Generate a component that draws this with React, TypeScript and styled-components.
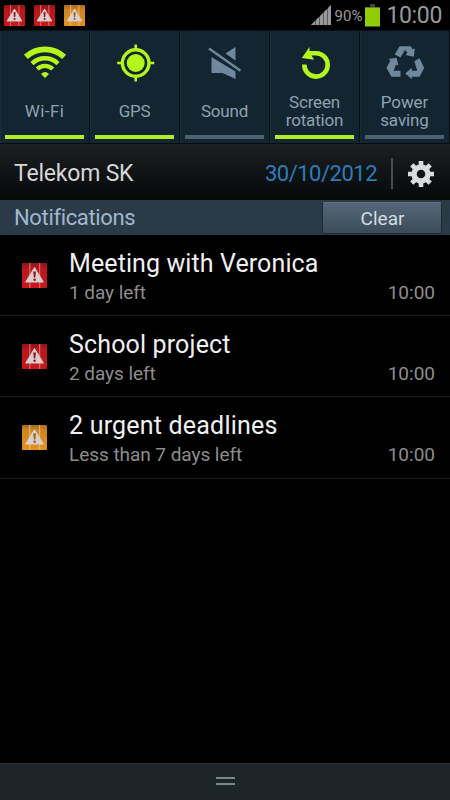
import React from "react";
import styled, { createGlobalStyle } from "styled-components";

const GlobalStyle = createGlobalStyle`
  * { box-sizing: border-box; }
  html, body { margin: 0; background: #000; }
`;

const Screen = styled.div`
  width: 450px;
  height: 800px;
  display: flex;
  flex-direction: column;
  overflow: hidden;
  background: #000;
  font-family: Roboto, "Noto Sans", sans-serif;
`;

const Label = styled.span<{ $size: number; $color: string; $track?: number; $line?: number }>`
  font-size: ${(p) => p.$size}px;
  line-height: ${(p) => p.$line ?? p.$size + 4}px;
  letter-spacing: ${(p) => p.$track ?? 0}px;
  color: ${(p) => p.$color};
  white-space: pre;
`;

const StatusBar = styled.header`
  height: 31px;
  flex: none;
  display: flex;
  justify-content: space-between;
  border-bottom: 1px solid #07121a;
  padding: 0 8px 0 4px;
`;

const StatusAlerts = styled.div`
  display: flex;
  gap: 9px;
  padding-top: 5px;
`;

const StatusInfo = styled.div`
  display: flex;
  align-items: center;
`;

const BatteryLevel = styled.div`
  display: flex;
  padding: 2px 3px 0 3px;
`;

const Clock = styled.div`
  display: flex;
  padding: 1px 0 0 6px;
`;

const Tiles = styled.nav`
  height: 113px;
  flex: none;
  display: grid;
  grid-template-columns: repeat(5, 90px);
  background: #132530;
  border-bottom: 1px solid #050b0f;
`;

const Tile = styled.div`
  display: flex;
  flex-direction: column;
  align-items: center;
  border-right: 1px solid #070f15;
  box-shadow: inset 1px 0 #192d39;
  padding: 12px 0 4px;
`;

const TileIcon = styled.div`
  height: 40px;
`;

const TileCaption = styled.div`
  height: 50px;
  padding-top: 6px;
  display: flex;
  flex-direction: column;
  align-items: center;
  justify-content: center;
`;

const Indicator = styled.div<{ $on: boolean }>`
  width: 79px;
  height: 4px;
  margin-top: 2px;
  background: ${(p) => (p.$on ? "#b0ee24" : "#4c6273")};
`;

const CarrierBar = styled.div`
  height: 56px;
  flex: none;
  display: flex;
  align-items: center;
  padding: 3px 15px 0 14px;
  background: linear-gradient(#1c2022, #060808);
`;

const Carrier = styled.div`
  flex: 1;
  display: flex;
`;

const Divider = styled.div`
  width: 2px;
  height: 31px;
  margin: 0 14px 0 14px;
  background: #4b4e50;
`;

const SectionBar = styled.div`
  height: 35px;
  flex: none;
  display: flex;
  align-items: center;
  justify-content: space-between;
  padding: 1px 8px 0 14px;
  background: #2b3a47;
`;

const ClearButton = styled.button`
  width: 120px;
  height: 32px;
  padding: 0 0 0 1px;
  display: flex;
  align-items: center;
  justify-content: center;
  border: 1px solid #1c2832;
  border-top-color: #61717f;
  border-radius: 2px;
  background: linear-gradient(#54677a, #3c4b59);
  font-family: inherit;
`;

const Row = styled.article<{ $height: number }>`
  height: ${(p) => p.$height}px;
  flex: none;
  display: grid;
  grid-template-columns: 47px 1fr;
  border-bottom: 1px solid #171c20;
  padding: 14px 15px 0 22px;
`;

const RowIcon = styled.div`
  padding-top: 14px;
`;

const RowText = styled.div`
  display: flex;
  flex-direction: column;
`;

const RowDetail = styled.div`
  display: flex;
  justify-content: space-between;
`;

const Spacer = styled.div`
  flex: 1;
`;

const Handle = styled.footer`
  height: 37px;
  flex: none;
  display: flex;
  flex-direction: column;
  align-items: center;
  gap: 4px;
  padding-top: 13px;
  background: #1e2528;
  border-top: 1px solid #2b3137;
`;

const Grip = styled.div`
  width: 19px;
  height: 2px;
  background: #7c8689;
`;

const LIME = "#b4f51c";
const STEEL = "#6f889d";

function Alert({ size, tone }: { size: number; tone: "red" | "amber" }) {
  const red = tone === "red";
  const id = `alert-${tone}`;
  const mark = "#d9cfcf";
  const ink = red ? "#951619" : "#9c6418";
  return (
    <svg width={size} height={size} viewBox="0 0 24 24" display="block">
      <defs>
        <linearGradient id={id} x1="0" y1="0" x2="0" y2="1">
          <stop offset="0" stopColor={red ? "#8e1519" : "#a86c22"} />
          <stop offset=".25" stopColor={red ? "#b9171b" : "#cf8620"} />
          <stop offset="1" stopColor={red ? "#c8191c" : "#e1931e"} />
        </linearGradient>
      </defs>
      <rect width="24" height="24" rx="1" fill={`url(#${id})`} />
      <path d="M7.5 0v24M17 0v24" stroke={red ? "#d8787a" : "#e9bd7a"} strokeWidth="1" />
      <path d="M12 4.6 20.4 18.3H3.6Z" fill={mark} stroke={mark} strokeWidth="1" strokeLinejoin="round" />
      <path d="M10.8 8.2h2.6l-.6 5.8h-1.4Z" fill={ink} />
      <circle cx="12.1" cy="16" r="1.2" fill={ink} />
    </svg>
  );
}

const Signal = () => (
  <svg width="21" height="22" viewBox="0 0 21 22">
    <path d="M0 21 20 1V21Z" fill="#5a5a5a" />
    <path d="M0 21 4 17v4ZM5 16 8 13v8H5ZM9 12 12 9v12H9ZM13 8 16 5v16H13ZM17 4l3-3v20h-3Z" fill="#999" />
  </svg>
);

const Battery = () => (
  <svg width="15" height="23" viewBox="0 0 15 23">
    <path d="M5 0h5v3H5Z" fill="#454545" />
    <rect y="3" width="15" height="19.5" fill="#91cc09" />
    <path d="M0 3.5h15" stroke="#617f20" />
  </svg>
);

const Wifi = () => (
  <svg width="44" height="40" viewBox="0 0 44 40">
    <g fill="none" stroke={LIME}>
      <path d="M2.9 13.9a28 28 0 0 1 38.2 0" strokeWidth="5.8" />
      <path d="M9 20.6a18.5 18.5 0 0 1 26 0" strokeWidth="4.4" />
      <path d="M14.3 26a11 11 0 0 1 15.4 0" strokeWidth="4.2" />
    </g>
    <path d="M18 31Q22 27 26 31L22 35Z" fill={LIME} />
  </svg>
);

const Gps = () => (
  <svg width="40" height="40" viewBox="0 0 40 40">
    <g transform="translate(.7 0)">
      <circle cx="20" cy="20" r="13.3" fill="none" stroke={LIME} strokeWidth="3.4" />
      <circle cx="20" cy="20" r="9" fill={LIME} />
      <path d="M20 1.5v5M20 33.5v5M1.5 20h5M33.5 20h5" stroke={LIME} strokeWidth="2.6" />
    </g>
  </svg>
);

const Mute = () => (
  <svg width="44" height="40" viewBox="0 0 44 40">
    <path d="M32.500 4V17.500L22.500 10.500ZM8.500 14 32.500 28.500V36L19.500 30H8.500Z" fill={STEEL} />
    <path d="M6 5.500 37.500 27.800" stroke="#132530" strokeWidth="5" />
    <path d="M6 5.500 37.500 27.800" stroke={STEEL} strokeWidth="2.4" />
  </svg>
);

const Rotate = () => (
  <svg width="40" height="40" viewBox="0 0 40 40">
    <path d="M9.300 21.500a11.700 11.700 0 1 0 12-11.300H14" fill="none" stroke={LIME} strokeWidth="4.6" />
    <path d="M14.500 4V8.500L19 16.800 6.800 15Z" fill={LIME} />
  </svg>
);

const Recycle = () => (
  <svg width="40" height="40" viewBox="0 0 40 40">
    <g fill={STEEL}>
      <path d="M9.800 11.500 14.500 3.300H25.800L27.500 6.300 29.800 5.500 28.800 13.700 20.500 12 22.500 9.500 20 7 15.500 14.500Z" />
      <path d="M3.500 16 11.500 14.800 13.500 22.300 11 21.800 8.500 27.700H15.500V33.700H6.500L1.500 25 5.300 17.800Z" />
      <path d="M29.300 18.300 34.500 15.300 39.200 25 34.500 33.700H26.800V36.300L20.300 30.500 26.800 24.800V27.700H32.200Z" />
    </g>
  </svg>
);

const Gear = () => (
  <svg width="28" height="28" viewBox="0 0 28 28">
    <g stroke="#d9dbdc">
      <circle cx="14" cy="14" r="7" fill="none" strokeWidth="5.4" />
      <path d="M14 1v5M14 22v5M1 14h5M22 14h5M4.800 4.800l3.700 3.700M19.500 19.500l3.700 3.700M23.200 4.800l-3.700 3.700M8.500 19.500l-3.700 3.700" strokeWidth="4.6" />
    </g>
  </svg>
);

const tiles = [
  { lines: ["Wi-Fi"], on: true, icon: <Wifi />, track: 0.4 },
  { lines: ["GPS"], on: true, icon: <Gps />, track: -0.3 },
  { lines: ["Sound"], on: false, icon: <Mute />, track: -0.2 },
  { lines: ["Screen", "rotation"], on: true, icon: <Rotate />, track: -0.2 },
  { lines: ["Power", "saving"], on: false, icon: <Recycle />, track: -0.1 },
];

const notices = [
  { title: "Meeting with Veronica", detail: "1 day left", tone: "red" as const, height: 81, track: 0.1 },
  { title: "School project", detail: "2 days left", tone: "red" as const, height: 81, track: 0.15 },
  { title: "2 urgent deadlines", detail: "Less than 7 days left", tone: "amber" as const, height: 82, track: 0.2 },
];

export default function App() {
  return (
    <Screen>
      <GlobalStyle />
      <StatusBar>
        <StatusAlerts>
          <Alert size={21} tone="red" />
          <Alert size={21} tone="red" />
          <Alert size={21} tone="amber" />
        </StatusAlerts>
        <StatusInfo>
          <Signal />
          <BatteryLevel>
            <Label $size={15} $color="#999">90%</Label>
          </BatteryLevel>
          <Battery />
          <Clock>
            <Label $size={23} $color="#999" $track={-0.35}>10:00</Label>
          </Clock>
        </StatusInfo>
      </StatusBar>
      <Tiles>
        {tiles.map((t) => (
          <Tile key={t.lines[0]}>
            <TileIcon>{t.icon}</TileIcon>
            <TileCaption>
              {t.lines.map((l) => (
                <Label key={l} $size={17} $line={18.5} $color="#8fa2b1" $track={t.track}>{l}</Label>
              ))}
            </TileCaption>
            <Indicator $on={t.on} />
          </Tile>
        ))}
      </Tiles>
      <CarrierBar>
        <Carrier>
          <Label $size={23} $color="#d6d6d6" $track={-0.2}>Telekom SK</Label>
        </Carrier>
        <Label $size={22} $color="#2b7dbd" $track={-0.5}>30/10/2012</Label>
        <Divider />
        <Gear />
      </CarrierBar>
      <SectionBar>
        <Label $size={22} $color="#a0b8cf" $track={-0.35}>Notifications</Label>
        <ClearButton>
          <Label $size={19} $color="#d3dbe3">Clear</Label>
        </ClearButton>
      </SectionBar>
      {notices.map((n) => (
        <Row key={n.title} $height={n.height}>
          <RowIcon>
            <Alert size={25} tone={n.tone} />
          </RowIcon>
          <RowText>
            <Label $size={25} $line={30} $color="#f0f0f0" $track={n.track}>{n.title}</Label>
            <RowDetail>
              <Label $size={19} $line={28} $color="#8d8d8d" $track={-0.05}>{n.detail}</Label>
              <Label $size={19} $line={28} $color="#8d8d8d">10:00</Label>
            </RowDetail>
          </RowText>
        </Row>
      ))}
      <Spacer />
      <Handle>
        <Grip />
        <Grip />
      </Handle>
    </Screen>
  );
}
